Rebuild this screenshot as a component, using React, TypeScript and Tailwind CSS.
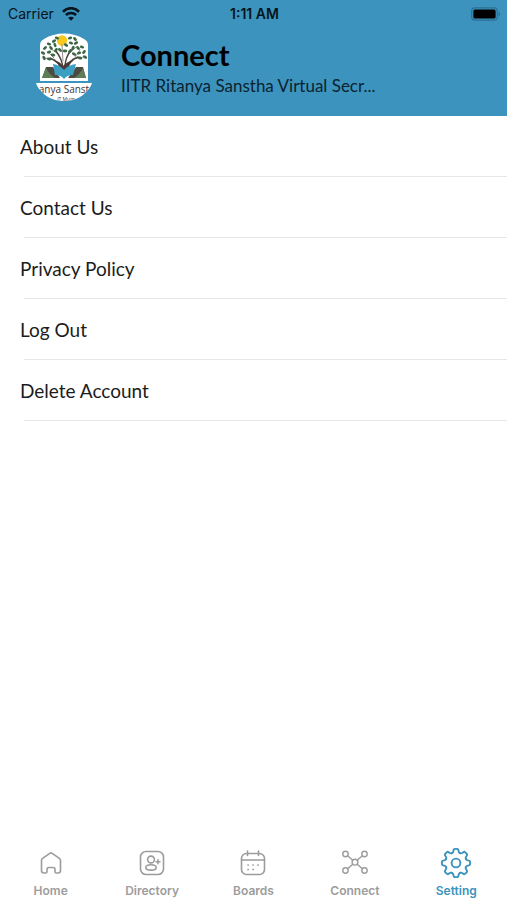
import type { ReactNode } from 'react';

const menuItems = ['About Us', 'Contact Us', 'Privacy Policy', 'Log Out', 'Delete Account'];

const WifiIcon = () => (
  <svg width="18" height="14" viewBox="0 0 18 14" fill="none" stroke="#06141c" aria-hidden="true">
    <path d="M0.9 4.7 C5.5 0.1 12.5 0.1 17.1 4.7" strokeWidth="2.7" />
    <path d="M3.9 8 C6.8 5.2 11.2 5.2 14.1 8" strokeWidth="2.5" />
    <path d="M9 13.7 L6.1 10.8 C7.8 9.3 10.2 9.3 11.9 10.8 Z" fill="#06141c" stroke="none" />
  </svg>
);

const BatteryIcon = () => (
  <svg width="30" height="14" viewBox="0 0 30 14" aria-hidden="true">
    <rect x="0.7" y="0.9" width="25.6" height="12.2" rx="3.2" fill="none" stroke="#2c6f94" strokeWidth="1.2" />
    <rect x="2.4" y="2.5" width="22.2" height="9" rx="1.6" fill="#000" />
    <path d="M27.6 5 C29.6 5.6 29.6 8.4 27.6 9 Z" fill="#2c6f94" />
  </svg>
);

const leaves = [
  [8, 20, 30], [10, 15, -40], [14, 11, 20], [9, 25, 60], [14, 19, -20], [16, 15, 50],
  [19, 8, -30], [18, 22, 10], [20, 12, 70], [21, 17, -50], [22, 5, 20],
  [25, 17, 40], [31, 12, 30], [30, 18, 0], [35, 5, -20],
  [35, 18, -40], [36, 10, 20], [38, 15, -60], [39, 21, 30], [41, 10, -30],
  [43, 15, 50], [44, 20, -20], [47, 14, 20], [49, 19, -50], [45, 25, 10], [50, 24, 30],
  [14, 26, 20], [40, 6, 50],
];

const Logo = () => (
  <svg width="58" height="70" viewBox="0 0 58 70" role="img" aria-label="Ritanya Sanstha">
    <defs>
      <clipPath id="logo-base">
        <path d="M1 50 H57 C56 54 53 57 50 60 C45 65.5 37 68 29 68 C21 68 13 65.5 8 60 C5 57 2 54 1 50 Z" />
      </clipPath>
    </defs>
    <path d="M5 48 V12 Q5 8 9 6 Q18 0.5 29 0.5 Q40 0.5 49 6 Q53 8 53 12 V48 Z" fill="#fff" />
    <circle cx="27" cy="7.5" r="5.2" fill="#f8c81c" />
    <g fill="none" stroke="#4a403d" strokeLinecap="round">
      <path d="M27 37 Q26 30 15 25 M31 37 Q31 29 43 24 M28 35 Q27 26 21 18 M30 34 Q30 25 36 17" strokeWidth="1.4" />
      <path d="M20 27 L10 25 M19 25 L13 19 M23 21 L16 16 M38 26 L49 24 M40 24 L45 17 M34 21 L41 14 M28 28 L27 12" strokeWidth="0.6" />
    </g>
    <path d="M19 27 Q26 29 28 33 Q31 29 39 27 Q33 32 33 38 L29 41 L24 38 Q25 31 19 27 Z" fill="#4a3a38" />
    {leaves.map(([x, y, angle]) => (
      <ellipse key={`${x}-${y}`} cx={x} cy={y} rx="2.3" ry="1.4" fill="#3c6845" transform={`rotate(${angle} ${x} ${y})`} />
    ))}
    <path d="M11 34 L18 34 L25 45 L7 45 Z M48 34 L41 34 L33 45 L51 45 Z" fill="#4c4a43" />
    <path d="M11 35 L7 45 L20 45 Q14 41 11 35 Z M48 35 L51 45 L39 45 Q45 41 48 35 Z" fill="#5f7d57" />
    <path d="M18 31 Q25 32 29 37 Q33 32 41 31 L38 42 Q32 42 29 46 Q26 42 20 42 Z" fill="#3a9fc0" />
    <g clipPath="url(#logo-base)">
      <rect y="50" width="58" height="20" fill="#fff" />
      <text x="29" y="60" textAnchor="middle" fontSize="10" fill="#46333b" className="font-['Open_Sans',sans-serif]">
        anya Sanst
      </text>
      <text x="31" y="68" textAnchor="middle" fontSize="5" fill="#46333b" className="font-['Open_Sans',sans-serif]">
        IT Mum
      </text>
    </g>
  </svg>
);

const NavIcon = ({ children }: { children: ReactNode }) => (
  <svg
    width="32"
    height="32"
    viewBox="0 0 32 32"
    fill="none"
    stroke="currentColor"
    strokeWidth="1.6"
    strokeLinecap="round"
    strokeLinejoin="round"
    aria-hidden="true"
  >
    {children}
  </svg>
);

const HomeIcon = () => (
  <NavIcon>
    <path d="M6.5 13.6 Q6.5 12.2 7.6 11.4 L14.8 6.3 Q16 5.4 17.2 6.3 L24.4 11.4 Q25.5 12.2 25.5 13.6 V23.5 Q25.5 26 23 26 H21.2 Q20 26 20 24.8 V22.5 Q20 20.5 18 20.5 H14 Q12 20.5 12 22.5 V24.8 Q12 26 10.8 26 H9 Q6.5 26 6.5 23.5 Z" />
  </NavIcon>
);

const DirectoryIcon = () => (
  <NavIcon>
    <rect x="4.5" y="4.5" width="23" height="23" rx="5.5" />
    <circle cx="15" cy="12.5" r="3.4" />
    <ellipse cx="15" cy="20.4" rx="5.2" ry="2.7" />
    <path d="M20 14.8 H24 M22 12.8 V16.8" />
  </NavIcon>
);

const BoardsIcon = () => (
  <NavIcon>
    <rect x="4.5" y="6.5" width="23" height="21" rx="5" />
    <path d="M4.5 13 H27.5 M10.5 4 V8.5 M21.5 4 V8.5" />
    <path d="M11 18 H11.2 M16 18 H16.2 M21 18 H21.2 M11 22.5 H11.2 M16 22.5 H16.2" strokeWidth="1.7" />
  </NavIcon>
);

const ConnectIcon = () => (
  <NavIcon>
    <g strokeWidth="1.4">
      <circle cx="6.5" cy="7" r="2.7" />
      <circle cx="25.5" cy="7" r="2.7" />
      <circle cx="6.5" cy="23.5" r="2.7" />
      <circle cx="25.5" cy="23.5" r="2.7" />
      <circle cx="16" cy="15.2" r="2.9" />
      <path d="M8.6 8.8 L13.8 13.2 M23.4 8.8 L18.2 13.2 M8.6 21.7 L13.8 17.2 M23.4 21.7 L18.2 17.2" />
    </g>
  </NavIcon>
);

const teeth = [0, 45, 90, 135, 180, 225, 270, 315];

const SettingIcon = () => (
  <NavIcon>
    {teeth.map((angle) => (
      <path
        key={angle}
        d="M11.9 6.2 C12.8 5.8 13.2 5.2 13.4 4.2 L13.6 3 Q13.8 1.9 15 1.9 H17 Q18.2 1.9 18.4 3 L18.6 4.2 C18.8 5.2 19.2 5.8 20.1 6.2"
        transform={`rotate(${angle} 16 16)`}
        strokeWidth="1.9"
      />
    ))}
    <circle cx="16" cy="16" r="4.4" strokeWidth="1.9" />
  </NavIcon>
);

const tabs = [
  { label: 'Home', Icon: HomeIcon },
  { label: 'Directory', Icon: DirectoryIcon },
  { label: 'Boards', Icon: BoardsIcon },
  { label: 'Connect', Icon: ConnectIcon },
  { label: 'Setting', Icon: SettingIcon, active: true },
];

const StatusBar = () => (
  <div className="grid grid-cols-3 items-center h-7 pl-2 pr-1.5 text-sm text-[#06141c] font-['Inter',sans-serif]">
    <div className="flex items-center gap-2">
      <span>Carrier</span>
      <WifiIcon />
    </div>
    <span className="text-center font-semibold">1:11 AM</span>
    <div className="flex justify-end">
      <BatteryIcon />
    </div>
  </div>
);

export default function App() {
  return (
    <div className="flex flex-col min-h-screen bg-white font-['Lato',sans-serif]">
      <header className="bg-[#3c93bd]">
        <StatusBar />
        <div className="flex items-start gap-7 pl-[35px] pr-4 pt-[5px] pb-[13px]">
          <Logo />
          <div className="min-w-0 pt-1">
            <h1 className="text-[29px] leading-9 font-bold text-black">Connect</h1>
            <p className="text-[17px] leading-[26px] text-[#0b2330] truncate">IITR Ritanya Sanstha Virtual Secr...</p>
          </div>
        </div>
      </header>

      <main className="flex-1">
        <ul>
          {menuItems.map((item) => (
            <li key={item}>
              <button type="button" className="block w-full h-[60px] pt-0.5 pl-5 text-left text-[19px] text-[#1c1c1c]">
                {item}
              </button>
              <div className="ml-6 h-px bg-[#e6e6e6]" />
            </li>
          ))}
        </ul>
      </main>

      <nav className="grid grid-cols-5 pb-px font-['Inter',sans-serif]">
        {tabs.map(({ label, Icon, active }) => (
          <button
            key={label}
            type="button"
            aria-current={active ? 'page' : undefined}
            className={`flex flex-col items-center gap-1 text-xs leading-4 font-semibold ${active ? 'text-[#3c93bd]' : 'text-[#9c9c9c]'}`}
          >
            <Icon />
            {label}
          </button>
        ))}
      </nav>
    </div>
  );
}
